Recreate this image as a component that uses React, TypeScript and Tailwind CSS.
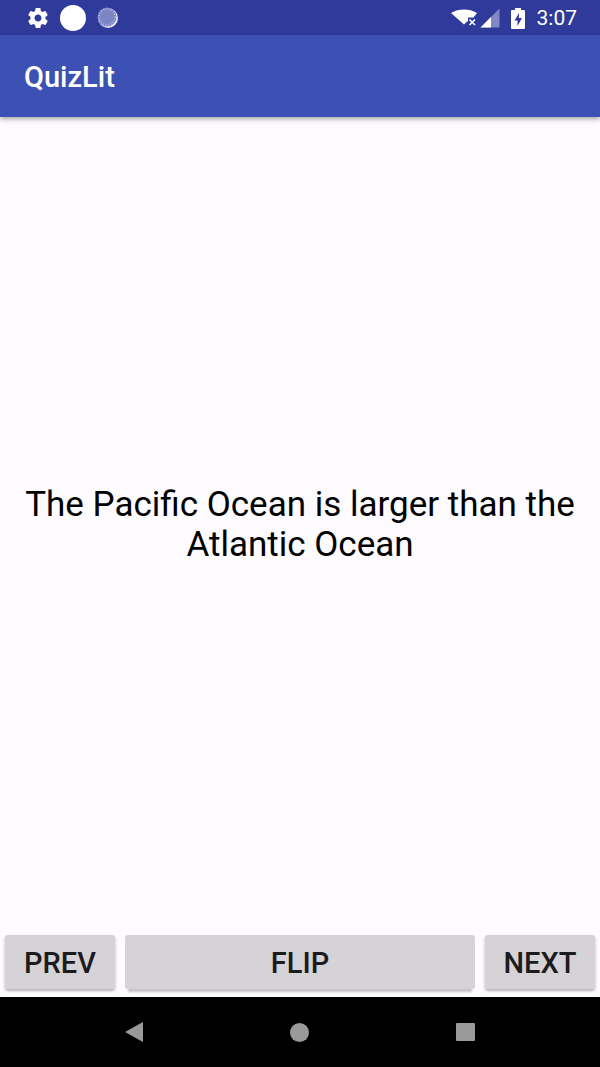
export default function App() {
  const btn = "h-[54px] rounded-[3px] bg-[#d5d3d6] text-[#1c1b1d] text-[29px] font-medium pt-[3px]";
  return (
    <div className="w-[600px] h-[1067px] flex flex-col bg-[#fdfbfd] overflow-hidden font-['Roboto',sans-serif]">
      <div className="h-[35px] bg-[#2f3a9b] flex items-center justify-between pl-[26px] pr-[23px] shrink-0">
        <div className="flex items-center">
          <svg width="24" height="24" viewBox="0 0 24 24" className="mr-[10px]">
            <path fill="#fff" d="M19.43 12.98c.04-.32.07-.64.07-.98s-.03-.66-.07-.98l2.11-1.65c.19-.15.24-.42.12-.64l-2-3.46c-.12-.22-.39-.3-.61-.22l-2.49 1c-.52-.4-1.08-.73-1.69-.98l-.38-2.65C14.46 2.18 14.25 2 14 2h-4c-.25 0-.46.18-.49.42l-.38 2.65c-.61.25-1.17.59-1.69.98l-2.49-1c-.23-.09-.49 0-.61.22l-2 3.46c-.13.22-.07.49.12.64l2.11 1.65c-.04.32-.07.65-.07.98s.03.66.07.98l-2.11 1.65c-.19.15-.24.42-.12.64l2 3.46c.12.22.39.3.61.22l2.49-1c.52.4 1.08.73 1.69.98l.38 2.65c.03.24.24.42.49.42h4c.25 0 .46-.18.49-.42l.38-2.65c.61-.25 1.17-.59 1.69-.98l2.49 1c.23.09.49 0 .61-.22l2-3.46c.12-.22.07-.49-.12-.64l-2.11-1.65zM12 15.5c-1.93 0-3.5-1.57-3.5-3.5s1.57-3.5 3.5-3.5 3.5 1.57 3.5 3.5-1.57 3.5-3.5 3.5z" />
          </svg>
          <div className="w-[26px] h-[26px] rounded-full bg-white mr-[11px]" />
          <svg width="22" height="22" viewBox="0 0 22 22">
            <circle cx="11" cy="11" r="10" fill="#fff" fillOpacity="0.9" />
            <circle cx="10" cy="10" r="9.5" fill="#7d85c4" />
            <circle cx="10" cy="10" r="8" fill="none" stroke="#c5c9e8" strokeWidth="1.2" strokeDasharray="1 1.6" />
          </svg>
        </div>
        <div className="flex items-center">
          <svg width="28" height="24" viewBox="0 0 28 24" className="mr-[2px]">
            <path fill="#fff" d="M1 7C5 4.500 9.500 3.500 14 3.500s9 1 13 3.500l-3.500 4.500H18v4h-1.500V16L14 18.500z" />
            <path stroke="#fff" strokeWidth="1.600" d="M19.500 13.500l5.500 5.500M25 13.500l-5.500 5.500" />
          </svg>
          <svg width="20" height="20" viewBox="0 0 20 20" className="mr-[11px]">
            <path fill="#fff" fillOpacity="0.4" d="M19.500 0.500v19H0.500z" />
            <path fill="#fff" d="M11 9v10.500H0.500z" />
          </svg>
          <svg width="14" height="24" viewBox="0 0 14 24" className="mr-[12px]">
            <path fill="#fff" fillRule="evenodd" d="M4 2h6v2h3a1 1 0 0 1 1 1v17a1 1 0 0 1-1 1H1a1 1 0 0 1-1-1V5a1 1 0 0 1 1-1h3zM8 7L3.500 14.500H6.500V20L11 12H7.800z" />
          </svg>
          <span className="text-white text-[21px] leading-none mt-[2px]">3:07</span>
        </div>
      </div>
      <div className="h-[82px] bg-[#3d50b3] flex items-center pl-[24px] shrink-0 shadow-[0_2px_5px_rgba(0,0,0,0.35)] z-10">
        <span className="text-white text-[29px] font-medium leading-none mt-[2px]">QuizLit</span>
      </div>
      <div className="flex-1 flex items-center justify-center px-[20px] pt-[6px]">
        <p className="text-black text-[35px] leading-[40px] text-center">
          The Pacific Ocean is larger than the Atlantic Ocean
        </p>
      </div>
      <div className="flex gap-[10px] px-[5px] pt-[8px] h-[70px] shrink-0 items-start">
        <button className={"w-[110px] shadow-[0_2px_3px_rgba(0,0,0,0.3)] " + btn}>PREV</button>
        <button className={"flex-1 shadow-[0_6px_2px_-3px_#c6c4c7] " + btn}>FLIP</button>
        <button className={"w-[110px] shadow-[0_2px_3px_rgba(0,0,0,0.3)] " + btn}>NEXT</button>
      </div>
      <div className="h-[70px] bg-black flex items-center justify-center shrink-0">
        <div className="flex items-center gap-[147px]">
          <svg width="18" height="20" viewBox="0 0 18 20">
            <path fill="#9a9a9a" d="M18 0V20L0 10z" />
          </svg>
          <div className="w-[19px] h-[19px] rounded-full bg-[#9a9a9a]" />
          <div className="w-[19px] h-[18px] rounded-[1px] bg-[#9a9a9a]" />
        </div>
      </div>
    </div>
  );
}
